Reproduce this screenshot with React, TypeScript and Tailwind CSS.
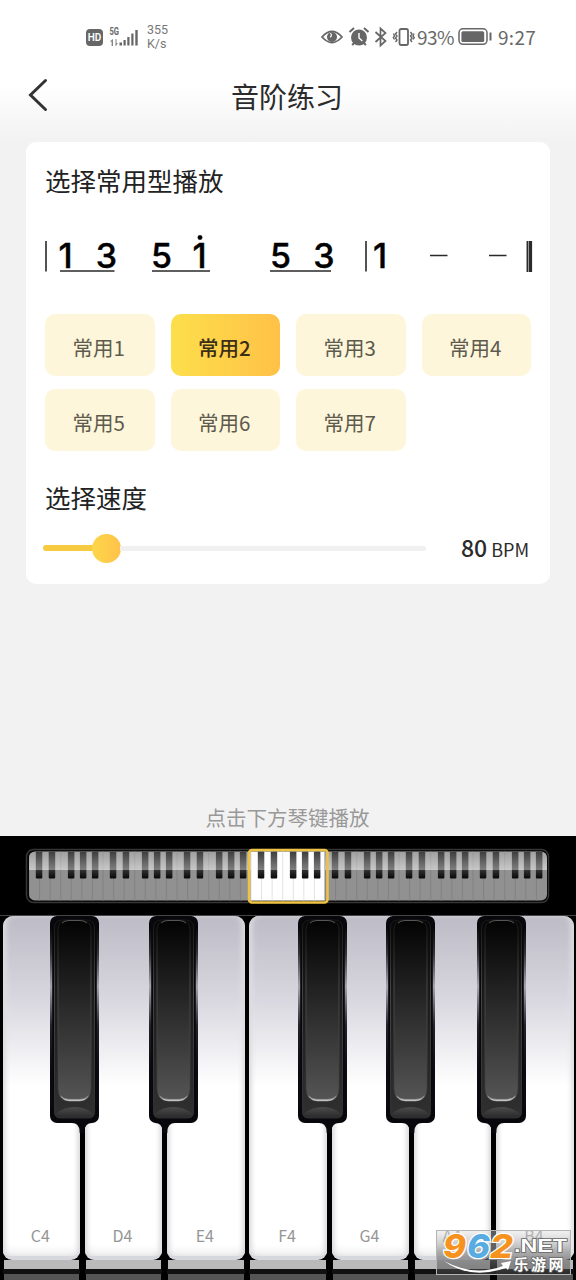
import { useState } from "react";

const patterns = ["常用1", "常用2", "常用3", "常用4", "常用5", "常用6", "常用7"];
const whiteKeys = ["C4", "D4", "E4", "F4", "G4", "A4", "B4"];
const blackKeys = [49.5, 149, 297.5, 385.5, 476.5];
const keyGaps = [82.2, 164.5, 329.2, 411.5, 493.8];

const miniBlack = [7.3, 20.2, 39.4, 51.4, 63.4];
const octaves = [0, 1, 2, 3, 4, 5, 6];

const StatusBar = () => {
  return (
    <div className="h-[74px] flex items-center pl-[86px] pr-10 text-[#696969]">
      <svg width="17" height="17" viewBox="0 0 17 17">
        <rect width="17" height="17" rx="4" fill="#666" />
        <text x="8.5" y="12.3" fontSize="10" fontFamily="Roboto, sans-serif" fontWeight="600" textAnchor="middle" fill="#fff">
          HD
        </text>
      </svg>
      <svg width="31" height="22" viewBox="0 0 31 22" className="ml-1.5 overflow-visible" fill="#666">
        <text
          x="0.5"
          y="9"
          fontFamily="Roboto, sans-serif"
          fontSize="10.5"
          fontWeight="700"
          textLength="9.5"
          lengthAdjust="spacingAndGlyphs"
        >
          5G
        </text>
        <path d="M4 13v7H2.6v-4.500H.7zM6.500 13h1v4h1.300l-1.800 3h-.5z" opacity=".8" />
        <path d="M10.500 16.500h2.500v3h-2.500zM14.500 14h2.200v5.500h-2.200zM18.300 11h2.200v8.500h-2.200zM22.300 7.500h2.200v12h-2.200zM26.300 4h2.400v15.500h-2.400z" />
      </svg>
      <div className="ml-[7px] w-6 font-['Roboto',sans-serif] text-[12.5px] leading-[14px] text-[#777]">
        <div>355</div>
        <div>K/s</div>
      </div>

      <svg width="96" height="24" viewBox="0 0 96 24" className="ml-auto -mr-px" fill="none" stroke="#666" strokeWidth="1.8">
        <path d="M2 12Q12 .8 22 12 12 23 2 12Z" />
        <circle cx="12" cy="12" r="5" fill="#666" stroke="none" />
        <path d="M10 8.500c1.800 0 2 2.500 0 3.700" stroke="#fff" strokeWidth="1.200" />
        <circle cx="39" cy="12.500" r="8" fill="#666" stroke="none" />
        <path d="m29.500 7 4.500-4M48.500 7 44 3M34 18l-1.800 2.200M44 18l1.800 2.200" strokeWidth="2" />
        <path d="M39 8v5l3.300 3" stroke="#fff" strokeWidth="1.400" />
        <path d="m55.500 7 10 9-5 4.500V3.500l5 4.500-10 9" strokeWidth="1.700" />
        <rect x="79.500" y="4" width="8.500" height="16" rx="1.700" />
        <path
          d="m77 7-1.500 2 1.500 2-1.500 2 1.500 2-1.500 2M73.500 8.500 74.500 11l-1.200 1.500 1.200 2M90.500 7l1.500 2-1.500 2 1.500 2-1.500 2 1.500 2M94 8.500 93 11l1.200 1.500-1.200 2"
          strokeWidth="1.400"
        />
      </svg>
      <span className="ml-0.5 w-[38px] text-[19px] leading-7 tracking-[-0.6px]">93%</span>
      <svg width="35" height="20" viewBox="0 0 35 20" className="ml-[3px]" fill="none" stroke="#666" strokeWidth="1.500">
        <rect x="1" y="1.800" width="28" height="15.500" rx="4" />
        <rect x="3.400" y="4.200" width="22.800" height="10.700" rx="1.500" fill="#666" stroke="none" />
        <path d="M32.500 5.500v8" strokeWidth="2" />
      </svg>
      <span className="ml-[5px] w-[38px] text-[19px] leading-7 tracking-[0.3px]">9:27</span>
    </div>
  );
};

// numbered notation for the selected pattern
const Score = () => {
  return (
    <svg
      width="492"
      height="52"
      viewBox="0 -4 492 52"
      className="mt-7 -ml-px overflow-visible"
      fontFamily="Inter, sans-serif"
      fontSize="34"
      fontWeight="500"
      stroke="#000"
      strokeWidth="0.4"
    >
      <g textAnchor="middle">
        <text x="21.500" y="37">1</text>
        <text x="62.500" y="37">3</text>
        <text x="117.500" y="37">5</text>
        <text x="155.500" y="37">1</text>
        <text x="236.500" y="37">5</text>
        <text x="280" y="37">3</text>
        <text x="336" y="37">1</text>
      </g>
      <circle cx="156" cy="6.500" r="2.200" />
      <g stroke="#2a2a2a" strokeWidth="1.600">
        <path d="M2 10v30.500M322 10v30.500M16 40h54.500M108 40h58M226 40h61" />
        <path d="M386 24.500h17.500M445 24.500h17.500" />
        <path d="M483.400 10v31" strokeWidth="1.700" />
        <path d="M486.400 10v31" strokeWidth="3.400" />
      </g>
    </svg>
  );
};

const MiniKeyboard = () => {
  return (
    <svg width="526" height="58" viewBox="0 0 526 58" className="block mx-auto">
      <defs>
        <clipPath id="mini">
          <rect x="4" y="5.500" width="518" height="49" rx="6" />
        </clipPath>
        <linearGradient id="gloss" x1="0" y1="0" x2="0" y2="1">
          <stop offset="0" stopColor="#fff" stopOpacity="0.12" />
          <stop offset="1" stopColor="#fff" stopOpacity="0.5" />
        </linearGradient>
        <linearGradient id="miniKey" x1="0" y1="0" x2="0" y2="1">
          <stop offset="0" stopColor="#3c3c3c" />
          <stop offset="0.69" stopColor="#808080" />
          <stop offset="0.7" stopColor="#303030" />
          <stop offset="1" stopColor="#080808" />
        </linearGradient>
      </defs>
      <rect x="1.500" y="3.500" width="522" height="53" rx="7" fill="#050505" stroke="#353535" strokeWidth="1.500" />
      <g clipPath="url(#mini)">
        <rect x="4" y="5" width="518" height="50" fill="#919191" />
        {octaves.map((o) => (
          <g key={o} transform={`translate(${4 + o * 74} 0)`}>
            {o === 3 && <rect y="5" width="74" height="50" fill="#fff" />}
            {whiteKeys.map((k, i) => (
              <path key={k} d={`M${i * 10.57} 5v50`} stroke={o === 3 ? "#e2e2e2" : "#828282"} strokeWidth="1" />
            ))}
          </g>
        ))}
        <rect x="4" y="5" width="222" height="19" fill="url(#gloss)" />
        <rect x="300" y="5" width="222" height="19" fill="url(#gloss)" />
        {octaves.map((o) => (
          <g key={o} transform={`translate(${4 + o * 74} 0)`}>
            {miniBlack.map((x) => (
              <rect key={x} x={x - 0.5} y="5" width="6.500" height="27.500" rx="1" fill="url(#miniKey)" />
            ))}
          </g>
        ))}
      </g>
      <rect x="224" y="4" width="78.500" height="52.500" rx="3" fill="none" stroke="#eec344" strokeWidth="2.500" />
    </svg>
  );
};

const BlackKey = () => {
  return (
    <svg width="49" height="207" viewBox="0 0 49 207" className="block">
      <defs>
        <linearGradient id="side" gradientUnits="userSpaceOnUse" x1="0" y1="0" x2="0" y2="207">
          <stop offset="0.05" stopColor="#050507" />
          <stop offset="0.18" stopColor="#333338" />
          <stop offset="0.34" stopColor="#a5a5ae" />
          <stop offset="0.53" stopColor="#22222b" />
          <stop offset="0.75" stopColor="#0b0a12" />
        </linearGradient>
        <linearGradient id="face" x1="0" y1="0" x2="0" y2="1">
          <stop offset="0" stopColor="#030303" />
          <stop offset="0.45" stopColor="#272727" />
          <stop offset="1" stopColor="#555" />
        </linearGradient>
        <linearGradient id="panel" x1="0" y1="0" x2="0" y2="1">
          <stop offset="0" stopColor="#070707" />
          <stop offset="0.4" stopColor="#1c1c1c" />
          <stop offset="1" stopColor="#303030" />
        </linearGradient>
        <linearGradient id="rim" x1="0" y1="0" x2="0" y2="1">
          <stop offset="0" stopColor="#1c1c1c" />
          <stop offset="0.35" stopColor="#5a5a5a" />
          <stop offset="1" stopColor="#383838" />
        </linearGradient>
        <linearGradient id="lip" x1="0" y1="0" x2="0" y2="1">
          <stop offset="0" stopColor="#4c4c4c" />
          <stop offset="1" stopColor="#292929" />
        </linearGradient>
      </defs>
      <rect width="49" height="207" rx="7" fill="#08080c" />
      <path d="M0 10h2.200v180H0zM46.800 10H49v180h-2.200z" fill="url(#side)" />
      <path
        d="M4.500 12q0-8 8-8h24q8 0 8 8v184q0 6-6 6h-28q-6 0-6-6Z"
        fill="url(#panel)"
        stroke="url(#rim)"
        strokeWidth="0.7"
      />
      <path d="M6 198q7-7 18.500-7T43 198q-1 3.500-5 3.500H11q-4 0-5-3.500Z" fill="url(#lip)" />
      <path
        d="M8 14q0-9 9-10h15q9 1 9 10v158q0 13-11 13h-11q-11 0-11-13Z"
        fill="url(#face)"
        stroke="url(#rim)"
        strokeWidth="0.7"
      />
      <path d="M10.500 180q3.500 5 9 5h10q5.500 0 9-5-3 3.400-9 3.400h-10q-6 0-9-3.400Z" fill="#ccc" stroke="#aaa" strokeWidth="0.500" />
      <path d="M12 7q3-2.500 7-2.500h11q4 0 7 2.500" fill="none" stroke="#555" strokeWidth="1" />
    </svg>
  );
};

const Piano = () => {
  return (
    <div className="relative h-[365px] border-t border-[#444] bg-black">
      <div className="flex gap-[4.8px] pl-[2.5px]">
        {whiteKeys.map((k) => (
          <div key={k} className="w-[77.5px] shrink-0">
            <div
              className={`h-[344px] rounded-b-[9px] bg-linear-to-b from-[#bdbcc6] via-[#d9d8e0] via-25% to-white to-50% border-b-4 border-[#d7d7de] shadow-[inset_4px_0_5px_-2px_#d8d8dc,inset_-4px_0_5px_-2px_#d8d8dc,inset_0_-5px_8px_#eeeeee] flex items-end justify-center ${
                k === "C4" || k === "F4" ? "rounded-tl-[10px]" : ""
              } ${k === "E4" || k === "B4" ? "rounded-tr-[10px]" : ""}`}
            >
              <span className="mb-[9px] pr-0.5 text-[16px] leading-[24px] text-[#969696]">{k}</span>
            </div>
            <div className="h-[9px] mx-px bg-[#bababa]" />
            <div className="h-[5px] bg-[#111]" />
            <div className="h-[7px] mx-px bg-[#555]" />
          </div>
        ))}
      </div>

      {/* the gap between two white keys widens where it meets the black key */}
      {keyGaps.map((x) => (
        <svg key={x} width="20" height="12" viewBox="0 0 20 12" className="absolute top-[205px]" style={{ left: x - 10 }}>
          <path d="M0 0H20V2Q13 2 12.400 10v2H7.600V10Q7 2 0 2Z" fill="#08080c" />
        </svg>
      ))}
      {blackKeys.map((x) => (
        <div key={x} className="absolute top-0" style={{ left: x }}>
          <BlackKey />
        </div>
      ))}
    </div>
  );
};

const SiteBadge = () => {
  return (
    <svg width="140" height="46" viewBox="0 0 140 46" className="absolute right-0 bottom-[4px] overflow-visible">
      <defs>
        <linearGradient id="badge" x1="0" y1="0" x2="0" y2="1">
          <stop offset="0" stopColor="#ddd" stopOpacity="0.4" />
          <stop offset="0.5" stopColor="#888" stopOpacity="0.7" />
          <stop offset="1" stopColor="#444" stopOpacity="0.5" />
        </linearGradient>
      </defs>
      <rect x="0.500" y="0.500" width="134" height="44" fill="url(#badge)" stroke="#b5b5b5" />
      <g
        fontFamily="Inter, sans-serif"
        fontSize="33"
        fontWeight="800"
        fontStyle="italic"
        stroke="#fff"
        strokeWidth="2.500"
        paintOrder="stroke"
      >
        <text x="7" y="28" fill="#f6931e" textLength="23" lengthAdjust="spacingAndGlyphs">9</text>
        <text x="31" y="28" fill="#58ace2" textLength="23" lengthAdjust="spacingAndGlyphs">6</text>
        <text x="54" y="28" fill="#f6931e" textLength="23" lengthAdjust="spacingAndGlyphs">2</text>
      </g>
      <path d="M8 31q30 16 59 5l-2-3 10-2-3 9-2-2Q34 50 8 31Z" fill="#fff" />
      <g fill="#fff" stroke="#666" strokeWidth="1.500" paintOrder="stroke">
        <text
          x="78"
          y="21.500"
          fontFamily="Liberation Sans, sans-serif"
          fontSize="18"
          fontWeight="700"
          textLength="53"
          lengthAdjust="spacingAndGlyphs"
        >
          .NET
        </text>
        <text x="77.500" y="40" fontSize="15" fontWeight="700" textLength="50">
          乐游网
        </text>
      </g>
    </svg>
  );
};

const App = () => {
  const [active, setActive] = useState("常用2");

  return (
    <div className="relative w-[576px] h-[1280px] overflow-hidden flex flex-col bg-[#f2f2f2] font-['Noto_Sans_CJK_SC',sans-serif] text-[#2b2b2b]">
      <div className="h-[142px] shrink-0 bg-linear-to-b from-white from-60% to-[#f2f2f2]">
        <StatusBar />
        <div className="relative h-11 flex items-center justify-center">
          <svg width="22" height="34" viewBox="0 0 22 34" className="absolute left-[27px] top-1" fill="none">
            <path d="M18.500 2.500 3.500 17l15 14.500" stroke="#333" strokeWidth="3" strokeLinecap="round" />
          </svg>
          <h1 className="text-[28px] leading-[42px] pr-0.5">音阶练习</h1>
        </div>
      </div>

      <div className="mx-[26px] h-[442px] shrink-0 rounded-[10px] bg-white px-[19px] pt-[19px]">
        <h2 className="text-[25.5px] leading-[38px] text-[#222]">选择常用型播放</h2>
        <Score />

        <div className="grid grid-cols-4 gap-x-4 gap-y-[13px] mt-[35px]">
          {patterns.map((p) => (
            <button
              key={p}
              onClick={() => setActive(p)}
              className={`h-[62px] rounded-[10px] pt-1 pr-0.5 text-[20.5px] ${
                p === active
                  ? "bg-linear-to-r from-[#fcdf4b] to-[#ffc147] font-medium text-[#3b2f16]"
                  : "bg-[#fdf6da] text-[#5e5a4e]"
              }`}
            >
              {p}
            </button>
          ))}
        </div>

        <h2 className="mt-[27px] text-[25.5px] leading-[38px] text-[#222]">选择速度</h2>
        <div className="mt-[14px] -ml-0.5 flex items-center h-9">
          <div className="w-[50px] h-[6px] rounded-l-full bg-[#f6cb3f]" />
          <div className="size-[29px] -mx-px rounded-full bg-linear-to-r from-[#fcd64a] to-[#ffc24a]" />
          <div className="w-[306px] h-[5px] rounded-r-full bg-[#f0f0f0]" />
          <div className="ml-auto pr-[2px] flex items-baseline whitespace-nowrap">
            <span className="text-[23px] leading-9 font-medium">80</span>
            <span className="ml-1 text-[18px] leading-9">BPM</span>
          </div>
        </div>
      </div>

      <p className="mt-auto mb-[3px] pr-px text-center text-[20.5px] leading-[31px] text-[#999]">点击下方琴键播放</p>

      <div className="h-[444px] shrink-0 bg-black">
        <div className="h-[79px] pt-[10px]">
          <MiniKeyboard />
        </div>
        <Piano />
      </div>
      <SiteBadge />
    </div>
  );
};

export default App;
